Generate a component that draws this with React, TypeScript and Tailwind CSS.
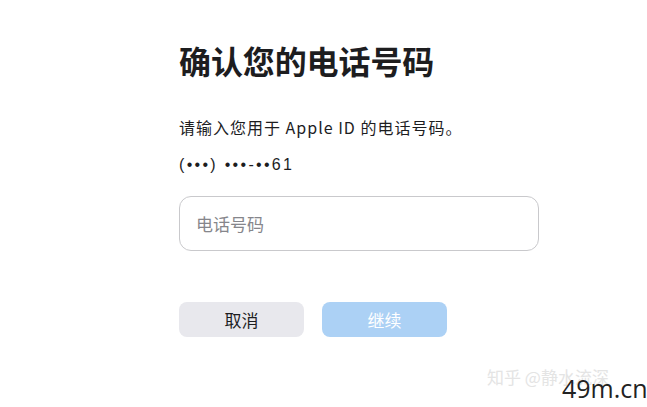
export default function App() {
  const font = { fontFamily: '"Noto Sans CJK SC", "Noto Sans", "Liberation Sans", sans-serif' };
  return (
    <div className="relative w-[647px] h-[407px] bg-white overflow-hidden" style={font}>
      <div className="flex flex-col pl-[179px] pt-[40px]">
        <h1 className="text-[32px] leading-[40px] font-bold text-[#1d1d1f] tracking-[-0.1px]">确认您的电话号码</h1>
        <p className="mt-[37px] text-[16px] leading-[20px] text-[#1d1d1f] tracking-[1px]">请输入您用于 Apple ID 的电话号码。</p>
        <p className="mt-[18px] text-[16px] leading-[20px] text-[#1d1d1f] tracking-[2.3px]" style={{ fontFamily: '"Liberation Sans", sans-serif' }}>(•••) •••-••61</p>
        <div className="mt-[21px] w-[360px] h-[55px] rounded-[12px] border border-[#c9c9cc] flex items-center pl-[16px]">
          <span className="text-[17px] text-[#86868b]">电话号码</span>
        </div>
        <div className="mt-[51px] flex gap-[18px]">
          <button className="w-[125px] h-[35px] rounded-[8px] bg-[#e8e8ed] text-[17px] text-[#1d1d1f]">取消</button>
          <button className="w-[125px] h-[35px] rounded-[8px] bg-[#acd1f5] text-[17px] text-white">继续</button>
        </div>
      </div>
      <div className="absolute left-[487px] top-[366px] text-[17px] leading-[22px] text-[#e4e4e4]">知乎 @静水流深</div>
      <div className="absolute left-[562px] top-[373px] text-[25px] leading-[30px] text-[#222]" style={{ fontFamily: '"Open Sans", "Liberation Sans", sans-serif' }}>49m.cn</div>
    </div>
  );
}
